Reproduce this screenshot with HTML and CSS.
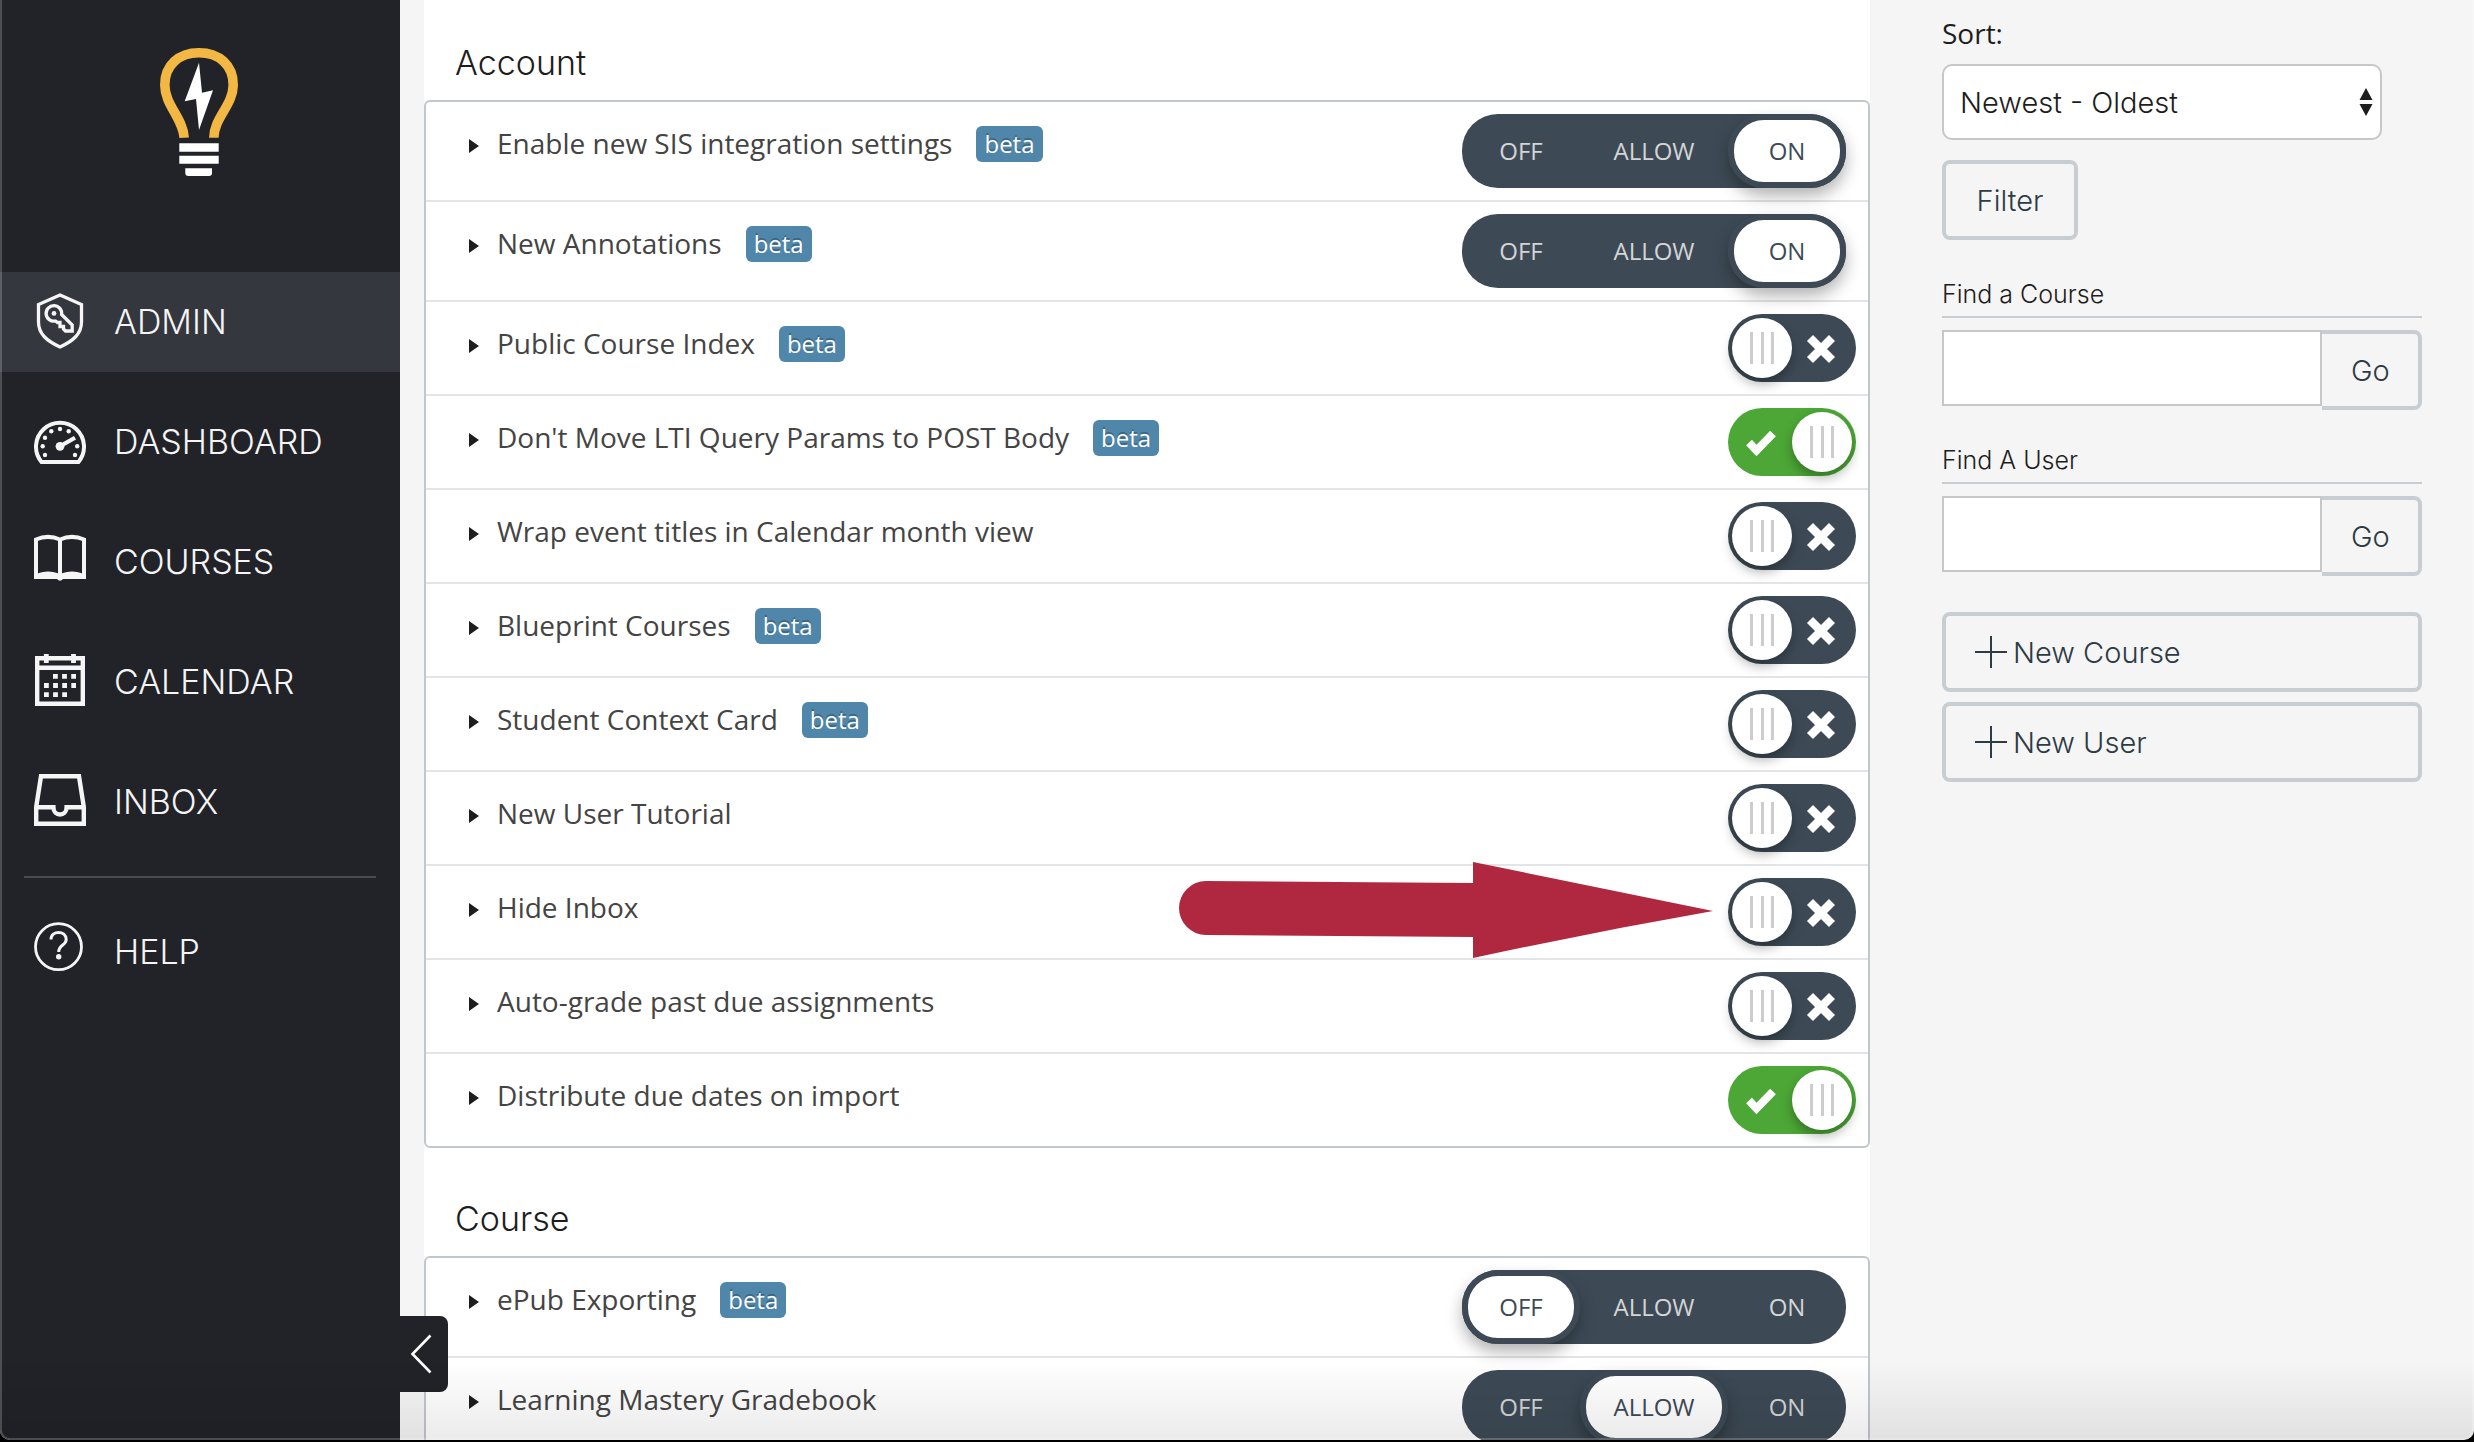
FILE: index.html
```html
<!DOCTYPE html>
<html lang="en">
<head>
  <meta charset="UTF-8">
  <meta name="viewport" content="width=device-width, initial-scale=1.0">
  <title>Feature Options</title>
  <link rel="stylesheet" href="styles.css">
</head>
<body>
  <!-- Shared icons -->
  <svg class="icon-defs" aria-hidden="true">
    <symbol id="icon-x" viewBox="0 0 30 30">
      <path d="M4 4L26 26M26 4L4 26" fill="none" stroke="#fff" stroke-width="8.5"/>
    </symbol>
    <symbol id="icon-check" viewBox="0 0 30 30">
      <path d="M3 14.5L10.5 22.5L27 5.5" fill="none" stroke="#fff" stroke-width="8"/>
    </symbol>
    <symbol id="icon-plus" viewBox="0 0 32 32">
      <path d="M16 0V32M0 16H32" fill="none" stroke="currentColor" stroke-width="2"/>
    </symbol>
  </svg>

  <div class="app">
    <!-- Global navigation -->
    <header class="sidebar">
      <a href="#" class="logo" aria-label="Home">
        <svg width="78" height="128" viewBox="0 0 78 128">
          <path d="M24.2 89.7C23 70 4.8 57 4.8 37C4.8 17 19 4.8 39 4.8S73.2 17 73.2 37C73.2 57 54 70 53.8 89.7" fill="none" stroke="#f3b743" stroke-width="9.6"/>
          <path d="M39 14.7L42 44.7L53 42.3L39 82L36 51L24.7 53.3Z" fill="#fff"/>
          <path d="M19.3 95.3H58.7V103.7H19.3ZM19.3 107.7H58.7V115.7H19.3ZM25.3 120.2H52V125Q52 128 49 128H28.3Q25.3 128 25.3 125Z" fill="#fff"/>
        </svg>
      </a>
      <nav class="menu">
        <a href="#" class="menu-item active">
          <svg viewBox="0 0 52 60">
            <path class="line" stroke-width="3.3" d="M26 4L47.5 13.5V31C47.5 43 39 50 26 56C13 50 4.5 43 4.5 31V13.5Z"/>
            <path class="line" stroke-width="3.3" d="M27.6 23.5L38.2 34V40H31.5L29.5 38V35.5H26V31.5H23.5L21.5 30A7.8 7.8 0 1 1 27.6 23.5Z"/>
            <circle cx="20" cy="22.4" r="2.4"/>
          </svg>
          <span>ADMIN</span>
        </a>
        <a href="#" class="menu-item">
          <svg viewBox="0 0 52 60">
            <path class="line" stroke-width="4" d="M7.5 51A24 24 0 1 1 44.5 51Z"/>
            <path class="line" stroke-width="4.2" d="M26 35.3L41 26.7"/>
            <circle cx="26" cy="35.3" r="4.4"/>
            <circle cx="26" cy="18" r="2.2"/>
            <circle cx="17.3" cy="20.3" r="2.2"/>
            <circle cx="34.7" cy="20.3" r="2.2"/>
            <circle cx="11" cy="26.7" r="2.2"/>
            <circle cx="8.7" cy="35.3" r="2.2"/>
            <circle cx="11" cy="44" r="2.2"/>
            <circle cx="43.2" cy="35.3" r="2.2"/>
            <circle cx="41" cy="44" r="2.2"/>
          </svg>
          <span>DASHBOARD</span>
        </a>
        <a href="#" class="menu-item">
          <svg viewBox="0 0 52 60">
            <path class="line" stroke-width="4" d="M2 8.5C10 5 18 5 26 8.5C34 5 42 5 50 8.5V46H2ZM26 8V46"/>
            <path d="M2 43C10 39.5 18 39.5 26 43C34 39.5 42 39.5 50 43V48H29Q26 51.5 23 48H2Z"/>
          </svg>
          <span>COURSES</span>
        </a>
        <a href="#" class="menu-item">
          <svg viewBox="0 0 52 60">
            <path class="line" stroke-width="4.4" d="M3.2 7.2H48.8V52.8H3.2ZM3.2 16.7H48.8"/>
            <path class="line" stroke-width="4.8" d="M12.3 3V12M39.5 3V12"/>
            <path class="line" stroke-width="4.8" stroke-dasharray="4.8 4.3" d="M19 25.3H42M10 34.5H42M10 43.7H33"/>
          </svg>
          <span>CALENDAR</span>
        </a>
        <a href="#" class="menu-item">
          <svg viewBox="0 0 52 60">
            <path class="line" stroke-width="4.4" d="M7 5.3H45L49.8 36V52.8H2.2V36Z"/>
            <path class="line" stroke-width="4.4" d="M2 36.2H19.4C19.4 46 32.6 46 32.6 36.2H50"/>
          </svg>
          <span>INBOX</span>
        </a>
        <hr class="menu-divider">
        <a href="#" class="menu-item">
          <svg viewBox="0 0 52 60">
            <circle class="line" stroke-width="2.8" cx="24.5" cy="25.7" r="23"/>
            <path class="line" stroke-width="3" d="M17 18.5C17 9 32.2 9 32.2 18.5C32.2 24.5 24.7 23.5 24.7 31"/>
            <circle cx="24.7" cy="35.8" r="2.7"/>
          </svg>
          <span>HELP</span>
        </a>
      </nav>
      <button class="collapse" aria-label="Minimize global navigation">
        <svg width="22" height="40" viewBox="0 0 22 40"><path d="M20.5 1.5L2.5 20L20.5 38.5" fill="none" stroke="#fff" stroke-width="2.6"/></svg>
      </button>
    </header>

    <!-- Feature options -->
    <main class="content">
      <section class="feature-set">
        <h2>Account</h2>
        <ul class="features">
          <li class="feature">
            <button class="feature-name">Enable new SIS integration settings</button>
            <span class="badge">beta</span>
            <div class="tri-state" role="radiogroup" aria-label="Enable new SIS integration settings">
              <label><input type="radio" name="sis"><span>OFF</span></label>
              <label class="allow"><input type="radio" name="sis"><span>ALLOW</span></label>
              <label><input type="radio" name="sis" checked><span>ON</span></label>
            </div>
          </li>
          <li class="feature">
            <button class="feature-name">New Annotations</button>
            <span class="badge">beta</span>
            <div class="tri-state" role="radiogroup" aria-label="New Annotations">
              <label><input type="radio" name="annotations"><span>OFF</span></label>
              <label class="allow"><input type="radio" name="annotations"><span>ALLOW</span></label>
              <label><input type="radio" name="annotations" checked><span>ON</span></label>
            </div>
          </li>
          <li class="feature">
            <button class="feature-name">Public Course Index</button>
            <span class="badge">beta</span>
            <label class="switch">
              <input type="checkbox" aria-label="Public Course Index">
              <svg class="off"><use href="#icon-x"/></svg>
            </label>
          </li>
          <li class="feature">
            <button class="feature-name">Don't Move LTI Query Params to POST Body</button>
            <span class="badge">beta</span>
            <label class="switch">
              <input type="checkbox" aria-label="Don't Move LTI Query Params to POST Body" checked>
              <svg class="on"><use href="#icon-check"/></svg>
            </label>
          </li>
          <li class="feature">
            <button class="feature-name">Wrap event titles in Calendar month view</button>
            <label class="switch">
              <input type="checkbox" aria-label="Wrap event titles in Calendar month view">
              <svg class="off"><use href="#icon-x"/></svg>
            </label>
          </li>
          <li class="feature">
            <button class="feature-name">Blueprint Courses</button>
            <span class="badge">beta</span>
            <label class="switch">
              <input type="checkbox" aria-label="Blueprint Courses">
              <svg class="off"><use href="#icon-x"/></svg>
            </label>
          </li>
          <li class="feature">
            <button class="feature-name">Student Context Card</button>
            <span class="badge">beta</span>
            <label class="switch">
              <input type="checkbox" aria-label="Student Context Card">
              <svg class="off"><use href="#icon-x"/></svg>
            </label>
          </li>
          <li class="feature">
            <button class="feature-name">New User Tutorial</button>
            <label class="switch">
              <input type="checkbox" aria-label="New User Tutorial">
              <svg class="off"><use href="#icon-x"/></svg>
            </label>
          </li>
          <li class="feature">
            <button class="feature-name">Hide Inbox</button>
            <label class="switch">
              <input type="checkbox" aria-label="Hide Inbox">
              <svg class="off"><use href="#icon-x"/></svg>
            </label>
            <svg class="pointer" width="534" height="96" viewBox="0 0 534 96" aria-hidden="true">
              <path d="M27 19L294 21V0L534 49Q414 70 294 96V75L27 73A27 27 0 0 1 27 19Z" fill="#b02840"/>
            </svg>
          </li>
          <li class="feature">
            <button class="feature-name">Auto-grade past due assignments</button>
            <label class="switch">
              <input type="checkbox" aria-label="Auto-grade past due assignments">
              <svg class="off"><use href="#icon-x"/></svg>
            </label>
          </li>
          <li class="feature">
            <button class="feature-name">Distribute due dates on import</button>
            <label class="switch">
              <input type="checkbox" aria-label="Distribute due dates on import" checked>
              <svg class="on"><use href="#icon-check"/></svg>
            </label>
          </li>
        </ul>
      </section>

      <section class="feature-set">
        <h2>Course</h2>
        <ul class="features">
          <li class="feature">
            <button class="feature-name">ePub Exporting</button>
            <span class="badge">beta</span>
            <div class="tri-state" role="radiogroup" aria-label="ePub Exporting">
              <label><input type="radio" name="epub" checked><span>OFF</span></label>
              <label class="allow"><input type="radio" name="epub"><span>ALLOW</span></label>
              <label><input type="radio" name="epub"><span>ON</span></label>
            </div>
          </li>
          <li class="feature">
            <button class="feature-name">Learning Mastery Gradebook</button>
            <div class="tri-state" role="radiogroup" aria-label="Learning Mastery Gradebook">
              <label><input type="radio" name="mastery"><span>OFF</span></label>
              <label class="allow"><input type="radio" name="mastery" checked><span>ALLOW</span></label>
              <label><input type="radio" name="mastery"><span>ON</span></label>
            </div>
          </li>
        </ul>
      </section>
    </main>

    <!-- Right side -->
    <aside class="right-side">
      <form class="sort-form">
        <label for="sort">Sort:</label>
        <div class="select-wrap">
          <select id="sort">
            <option>Newest - Oldest</option>
            <option>Oldest - Newest</option>
          </select>
          <svg width="14" height="28" viewBox="0 0 14 28" aria-hidden="true"><path d="M7 0L13.5 12H.5ZM7 28L13.5 16H.5Z" fill="#1d1d1d"/></svg>
        </div>
        <button type="button" class="btn">Filter</button>
      </form>
      <form class="find-form">
        <label for="find-course">Find a Course</label>
        <div class="find-row">
          <input type="text" id="find-course">
          <button type="button" class="btn">Go</button>
        </div>
      </form>
      <form class="find-form">
        <label for="find-user">Find A User</label>
        <div class="find-row">
          <input type="text" id="find-user">
          <button type="button" class="btn">Go</button>
        </div>
      </form>
      <div class="actions">
        <button class="btn btn-wide"><svg><use href="#icon-plus"/></svg>New Course</button>
        <button class="btn btn-wide"><svg><use href="#icon-plus"/></svg>New User</button>
      </div>
    </aside>
  </div>
</body>
</html>
```

FILE: styles.css
```css
/* General */
* {
  box-sizing: border-box;
}

body {
  margin: 0;
  background: #000;
  color: #1d1d1d;
  font-family: "Open Sans", sans-serif;
  font-size: 28px;
}

h2,
.menu-item,
.btn,
select,
.find-form label {
  font-family: Inter, sans-serif;
  font-weight: 300;
}

button {
  border: none;
  background: none;
  cursor: pointer;
}

.icon-defs {
  display: none;
}

.app {
  position: relative;
  display: flex;
  height: calc(100vh - 2px);
  overflow: hidden;
  background: #f5f5f5;
  border-radius: 0 0 10px 10px;
}

/* Window edge and the shade along the bottom */
.app::after {
  content: "";
  position: absolute;
  inset: 0;
  border: 2px solid rgba(255, 255, 255, 0.2);
  border-top: none;
  border-radius: 0 0 10px 10px;
  background: linear-gradient(to top, rgba(0, 0, 0, 0.08), transparent 80px);
  background-origin: border-box;
  pointer-events: none;
  z-index: 5;
}

/* Sidebar */
.sidebar {
  position: relative;
  flex: none;
  width: 400px;
  background: #222328;
}

.logo {
  display: flex;
  justify-content: center;
  padding: 48px 2px 96px 0;
}

.menu {
  display: flex;
  flex-direction: column;
  gap: 20px;
}

.menu-item {
  display: flex;
  align-items: center;
  gap: 28px;
  height: 100px;
  padding: 0 34px 2px;
  color: #f5f5f5;
  font-size: 34px;
  text-decoration: none;
}

.menu-item.active {
  background: #35373f;
}

.menu-item svg {
  width: 52px;
  height: 60px;
  fill: #f5f5f5;
}

.menu-item .line {
  fill: none;
  stroke: #f5f5f5;
}

.menu-divider {
  align-self: stretch;
  height: 2px;
  margin: 4px 24px;
  border: none;
  background: #4b4c51;
}

.collapse {
  position: absolute;
  left: 100%;
  bottom: 48px;
  width: 48px;
  height: 76px;
  padding: 0 6px 0 0;
  border-radius: 0 8px 8px 0;
  background: #222328;
  z-index: 2;
}

.collapse svg {
  display: block;
  margin: auto;
}

/* Features */
.content {
  flex: 1;
  margin-left: 24px;
  background: #fff;
}

.feature-set {
  padding-top: 43px;
}

.feature-set + .feature-set {
  margin-top: 8px;
}

h2 {
  margin: 0 0 17px;
  padding-left: 31px;
  font-size: 34px;
  line-height: 40px;
}

.features {
  margin: 0;
  padding: 0;
  list-style: none;
  border: 2px solid #c2c6cd;
  border-radius: 6px;
}

.feature {
  position: relative;
  display: flex;
  align-items: flex-start;
  padding: 12px 12px 12px 43px;
  border-bottom: 2px solid #e3e4e5;
}

.feature:last-child {
  border-bottom: none;
}

.feature-name {
  display: flex;
  align-items: center;
  gap: 18px;
  margin-top: 11px;
  padding: 0;
  color: #444;
  font-family: inherit;
  font-size: 28px;
  line-height: 36px;
}

.feature-name::before {
  content: "";
  margin-top: 5px;
  border: 7px solid transparent;
  border-left: 10px solid #1d1d1d;
  border-right: none;
}

.badge {
  margin: 12px 0 0 24px;
  padding: 0 8px;
  border-radius: 6px;
  background: #4f86aa;
  color: #fff;
  font-size: 24px;
  line-height: 36px;
  text-shadow: 0 -2px 0 rgba(0, 0, 0, 0.25);
}

/* Off / allow / on */
.tri-state {
  display: flex;
  margin: 0 10px 0 auto;
  border-radius: 36px;
  background: #3d4a55;
}

.tri-state label {
  position: relative;
  width: 118px;
  cursor: pointer;
}

.tri-state .allow {
  width: 148px;
}

.tri-state input {
  position: absolute;
  inset: 0;
  margin: 0;
  opacity: 0;
}

.tri-state span {
  display: block;
  border: 6px solid transparent;
  border-radius: 36px;
  color: #d3d5d7;
  font-size: 24px;
  line-height: 62px;
  text-align: center;
}

.tri-state input:checked + span {
  border-color: #3d4a55;
  background: #fff;
  box-shadow: 0 8px 16px rgba(0, 0, 0, 0.3);
  color: #3d4a55;
}

/* Switch */
.switch {
  position: relative;
  width: 128px;
  height: 68px;
  margin-left: auto;
}

.switch input {
  display: flex;
  appearance: none;
  width: 100%;
  height: 100%;
  margin: 0;
  padding: 4px;
  border-radius: 34px;
  background: #3d4a55;
  cursor: pointer;
}

.switch input::before {
  content: "";
  width: 60px;
  height: 60px;
  border-radius: 50%;
  background:
    linear-gradient(#ccc, #ccc) 18px 14px / 3px 32px no-repeat,
    linear-gradient(#ccc, #ccc) 29px 14px / 3px 32px no-repeat,
    linear-gradient(#ccc, #ccc) 39px 14px / 3px 32px no-repeat,
    #fff;
  box-shadow: 0 6px 12px rgba(0, 0, 0, 0.3);
}

.switch input:checked {
  justify-content: flex-end;
  background: #4ca736;
}

.switch svg {
  position: absolute;
  top: 20px;
  width: 30px;
  height: 30px;
  pointer-events: none;
}

.switch .off {
  right: 20px;
}

.switch .on {
  left: 18px;
}

.pointer {
  position: absolute;
  top: -4px;
  right: 155px;
  z-index: 1;
}

/* Right side */
.right-side {
  flex: none;
  width: 604px;
  padding: 14px 52px 0 72px;
}

.sort-form {
  display: flex;
  flex-direction: column;
  align-items: flex-start;
}

.sort-form label {
  line-height: 38px;
}

.select-wrap {
  position: relative;
  width: 440px;
  margin: 12px 0 20px;
}

select {
  appearance: none;
  display: block;
  width: 100%;
  height: 76px;
  padding: 0 16px;
  border: 2px solid #c7c7c7;
  border-radius: 10px;
  background: #fff;
  color: #1d1d1d;
  font-size: 29px;
}

.select-wrap svg {
  position: absolute;
  top: 24px;
  right: 9px;
  pointer-events: none;
}

.btn {
  height: 80px;
  padding: 0 29px;
  border: 4px solid #c7cdd1;
  border-radius: 8px;
  color: #2d3b45;
  font-size: 29px;
}

.sort-form .btn {
  min-width: 136px;
}

.find-form label {
  display: block;
  margin: 34px 0 12px;
  padding: 4px 0 6px;
  border-bottom: 2px solid #c7cdd1;
  font-size: 25px;
  line-height: 32px;
}

.find-form + .find-form label {
  margin-top: 30px;
}

.find-row {
  display: flex;
  align-items: flex-start;
}

.find-row input {
  flex: 1;
  min-width: 0;
  height: 76px;
  padding: 0 16px;
  border: 2px solid #c7c7c7;
  background: #fff;
  font-size: 28px;
}

.find-row .btn {
  width: 100px;
  border-left: none;
  border-radius: 0 8px 8px 0;
}

.actions {
  display: flex;
  flex-direction: column;
  gap: 10px;
  margin-top: 36px;
}

.btn-wide {
  display: flex;
  align-items: center;
  gap: 6px;
}

.btn-wide svg {
  width: 32px;
  height: 32px;
}
```
